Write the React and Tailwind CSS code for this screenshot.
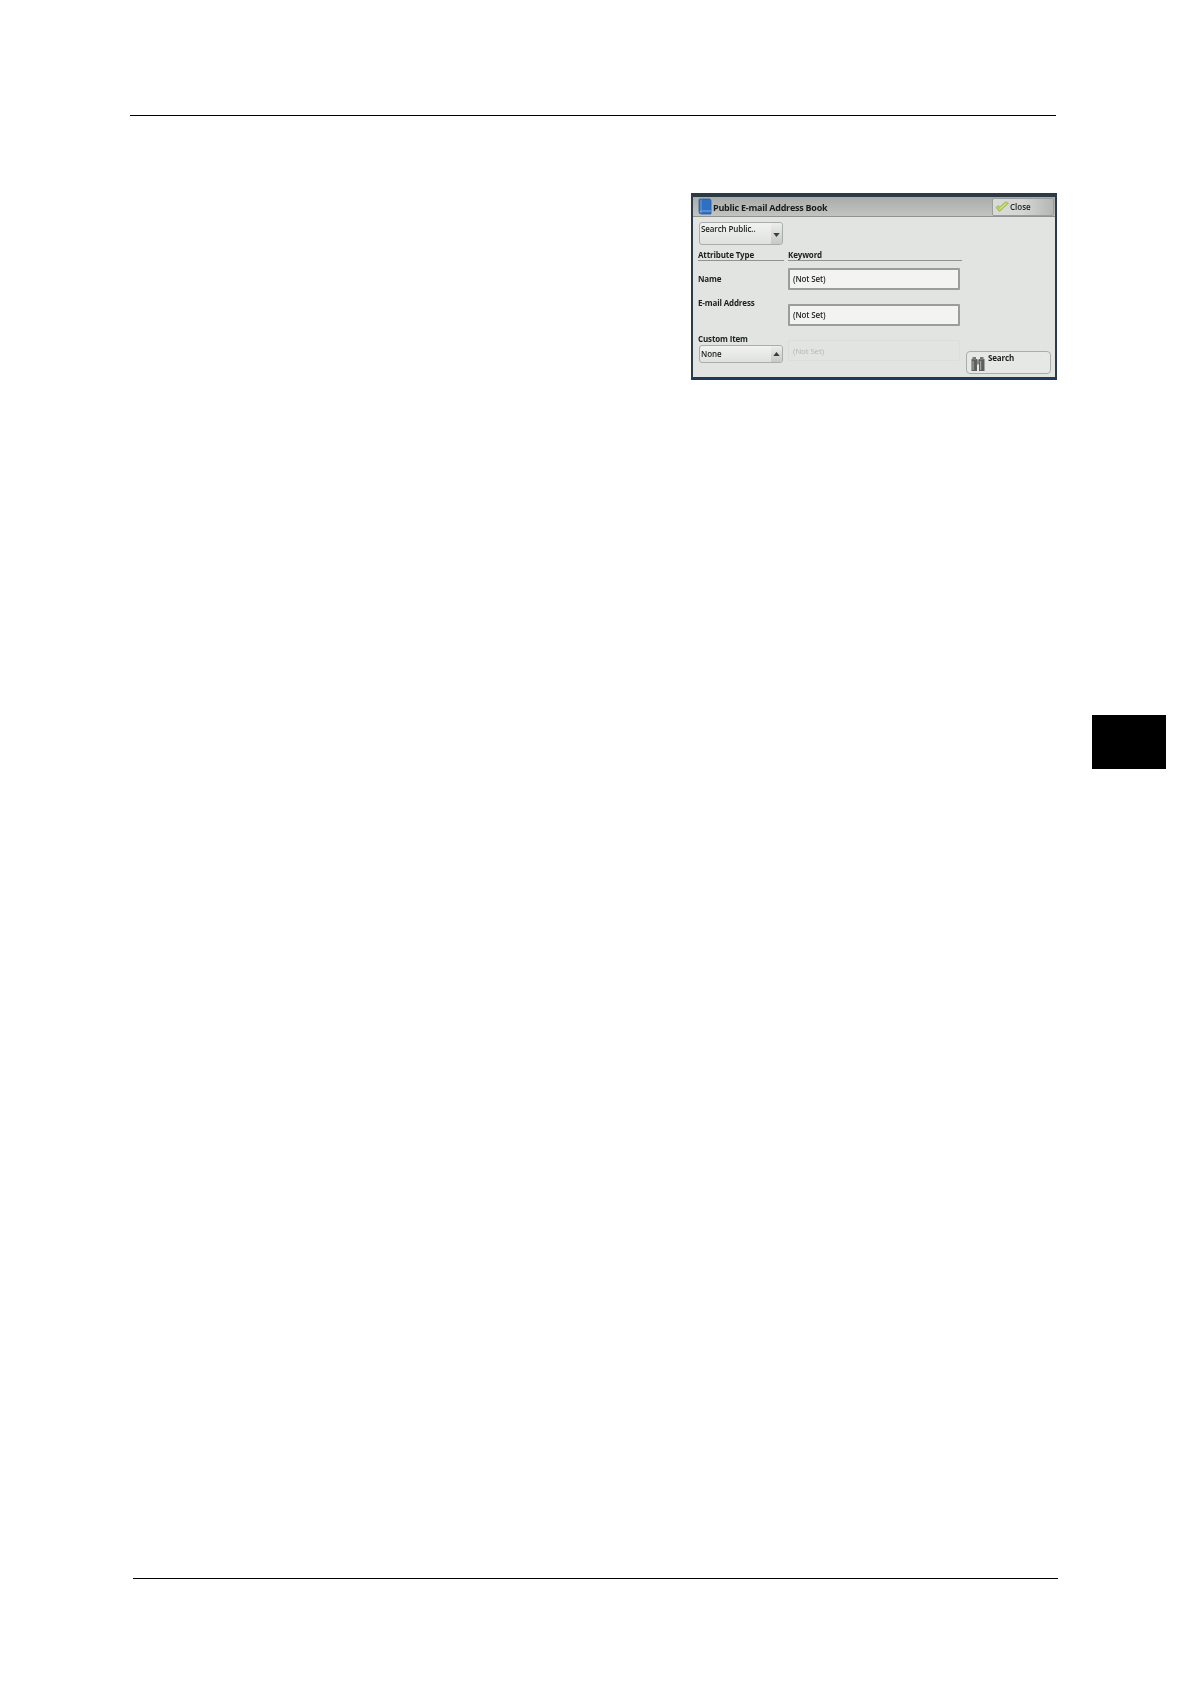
const ui = { fontFamily: '"Open Sans", sans-serif' };

function BookIcon() {
  return (
    <svg width="14" height="17" viewBox="0 0 14 17" className="shrink-0">
      <path d="M2 1 H11 Q13 1 13 3 V16 H3 Q1 16 1 14 V2 Q1 1 2 1 Z" fill="#2f6fc4" stroke="#2a5a9c" strokeWidth="0.8" />
      <path d="M3 1.5 V15.5" stroke="#6f9fdc" strokeWidth="1" />
      <path d="M1.5 14 Q2 13 3.5 13 H13" stroke="#9dbce4" strokeWidth="0.8" fill="none" />
    </svg>
  );
}

function CheckIcon() {
  return (
    <svg width="14" height="11" viewBox="0 0 14 11" className="shrink-0">
      <path d="M1 6.5 L3 4.5 L4.8 6 L10.5 0.8 L13.5 2.2 L4.5 10.5 Z" fill="#b5d24e" stroke="#8aa548" strokeWidth="0.6" />
      <path d="M4.6 8 L11.5 2" stroke="#e3efaa" strokeWidth="0.8" />
    </svg>
  );
}

function BinocularsIcon() {
  return (
    <svg width="14" height="14" viewBox="0 0 14 14" className="shrink-0">
      <rect x="0.5" y="2" width="5.5" height="12" fill="#5c5f5c" />
      <rect x="8" y="2" width="5.5" height="12" fill="#5c5f5c" />
      <rect x="1.5" y="0" width="3.5" height="3" fill="#767976" />
      <rect x="9" y="0" width="3.5" height="3" fill="#767976" />
      <rect x="6" y="2.5" width="2" height="5" fill="#8b8e8b" />
      <rect x="1.5" y="4" width="1.2" height="9" fill="#a2a5a2" />
      <rect x="9" y="4" width="1.2" height="9" fill="#a2a5a2" />
    </svg>
  );
}

function Arrow({ up }) {
  return (
    <svg width="7" height="4" viewBox="0 0 8 5">
      <path d={up ? 'M4 0 L8 5 H0 Z' : 'M0 0 H8 L4 5 Z'} fill="#3a3d3c" />
    </svg>
  );
}

function SelectBox({ label, up, tall }) {
  return (
    <div className={`flex w-[84px] rounded-[3px] border border-[#a9adab] bg-gradient-to-b from-[#f2f3f1] to-[#dfe1de] ${tall ? 'h-[23px]' : 'h-[18px]'}`}>
      <div className={`flex-1 pl-[1px] text-[8px] font-semibold leading-[10px] tracking-[-0.1px] text-[#1d1f1e] ${tall ? 'pt-[1px]' : 'pt-[3px]'}`}>{label}</div>
      <div className={`flex w-[11px] justify-center rounded-r-[3px] bg-gradient-to-b from-[#eceeeb] to-[#c6c9c6] ${tall ? 'pt-[10px]' : 'pt-[6px]'}`}>
        <Arrow up={up} />
      </div>
    </div>
  );
}

function KeywordInput({ disabled }) {
  if (disabled) {
    return (
      <div className="flex h-[21px] w-[172px] items-center rounded-[2px] border border-[#dcdedb] pl-[4px] text-[8px] text-[#b4b7b4]">
        (Not Set)
      </div>
    );
  }
  return (
    <div className="flex h-[22px] w-[172px] items-center rounded-[1px] border-2 border-[#9a9d9b] bg-[#f3f4f2] pl-[3px] text-[8px] font-semibold text-[#262827]">
      (Not Set)
    </div>
  );
}

function AddressBookPanel() {
  return (
    <div className="flex h-[187px] w-[366px] flex-col border-x-2 border-t-4 border-b-[3px] border-x-[#2c3b4c] border-t-[#2c3a46] border-b-[#1f3a58] blur-[0.4px]" style={ui}>
      {/* Title bar */}
      <div className="flex h-[20px] shrink-0 items-center justify-between border-b border-[#8f928f] bg-gradient-to-b from-[#a9aca9] to-[#c2c4c1] pl-[5px] pr-[1px]">
        <div className="flex items-center gap-[1px]">
          <BookIcon />
          <span className="mt-[3px] text-[9px] font-bold tracking-[-0.25px] text-[#1a1c1b]">Public E-mail Address Book</span>
        </div>
        <div className="flex h-[18px] w-[62px] items-center gap-[1px] rounded-[2px] border border-[#9a9d9a] bg-gradient-to-r from-[#d9dbd8] via-[#d4d6d3] to-[#b4b7b4] pl-[2px] text-[8px] font-semibold text-[#1d1f1e]">
          <CheckIcon />
          <span>Close</span>
        </div>
      </div>

      {/* Form body */}
      <div className="flex flex-1 bg-[#e2e4e1] pl-[5px] text-[8px] tracking-[-0.15px] text-[#1d1f1e]">
        <div className="w-[265px] shrink-0">
          <div className="ml-[1px] mt-[5px]">
            <SelectBox label="Search Public.." tall />
          </div>
          <div className="mt-[5px] flex gap-[4px] leading-[10px]">
            <div className="w-[86px] border-b border-[#8f928f] font-bold">Attribute Type</div>
            <div className="w-[174px] border-b border-[#8f928f] font-bold">Keyword</div>
          </div>
          <div className="mt-[7px] flex items-center">
            <div className="w-[90px] font-bold">Name</div>
            <KeywordInput />
          </div>
          <div className="mt-[14px] flex items-start">
            <div className="-mt-[7px] w-[90px] font-bold">E-mail Address</div>
            <KeywordInput />
          </div>
          <div className="mt-[14px] flex items-start">
            <div className="w-[90px]">
              <div className="-mt-[6px] font-bold leading-[10px]">Custom Item</div>
              <div className="ml-[1px] mt-[1px]">
                <SelectBox label="None" up />
              </div>
            </div>
            <KeywordInput disabled />
          </div>
        </div>
        <div className="flex flex-1 items-end pb-[3px] pl-[3px]">
          <div className="flex h-[23px] w-[85px] items-start gap-[3px] rounded-[4px] border border-[#a9adab] bg-[#e6e8e5] pl-[4px] pt-[5px]">
            <BinocularsIcon />
            <span className="-mt-[4px] font-bold leading-[10px]">Search</span>
          </div>
        </div>
      </div>
    </div>
  );
}

export default function App() {
  return (
    <div className="flex h-[1684px] w-[1190px] flex-col bg-white">
      <div className="ml-[130px] mt-[115px] w-[926px] border-t border-black" />
      <div className="ml-[691px] mt-[77px]">
        <AddressBookPanel />
      </div>
      {/* Chapter tab on the page edge */}
      <div className="ml-[1092px] mt-[335px] h-[54px] w-[74px] bg-black" />
      <div className="ml-[133px] mt-[809px] w-[925px] border-t border-black" />
    </div>
  );
}
